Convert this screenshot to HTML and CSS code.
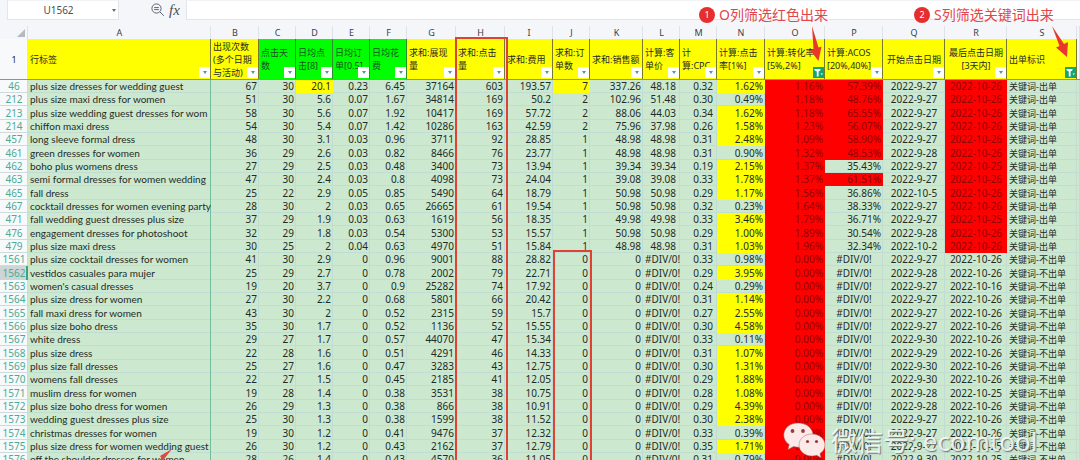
FILE: index.html
```html
<!DOCTYPE html>
<html lang="zh-CN">
<head>
<meta charset="utf-8">
<title>U1562</title>
<link rel="stylesheet" href="styles.css">
</head>
<body>
<div class="app">
  <header class="bar">
    <div class="namebox">
      <input class="name-input" type="text" value="U1562" aria-label="名称框">
      <button class="name-drop" type="button" aria-label="展开名称框"></button>
    </div>
    <div class="tools">
      <button class="tool" type="button" aria-label="搜索">
        <svg width="14" height="14" viewBox="0 0 14 14" fill="none" stroke="#5d6470"><circle cx="5.5" cy="5.5" r="4.6"/><path d="M3.2 4.6h4.6M3.2 6.6h4.6M9 9l3.8 3.8"/></svg>
      </button>
      <button class="tool fx" type="button">fx</button>
    </div>
    <input class="formula" type="text" aria-label="编辑栏">
  </header>
  <main class="sheet">
    <table class="grid">
      <colgroup id="cols"></colgroup>
      <thead id="head"></thead>
      <tbody id="body"></tbody>
    </table>
    <div class="frame frame-clicks"></div>
    <div class="frame frame-orders"></div>
  </main>
  <div class="note note-one"><span class="badge">1</span>O列筛选红色出来</div>
  <div class="note note-two"><span class="badge">2</span>S列筛选关键词出来</div>
  <svg class="arrow arrow-one" width="12" height="36" viewBox="0 0 12 36"><path fill="#e8382c" d="M2 0L8.500 21.500L11.500 20.500L8.500 35L0 24L3.500 23.500Z"/></svg>
  <svg class="arrow arrow-two" width="17" height="32" viewBox="0 0 17 32"><path fill="#e8382c" d="M0 0L12 18L16 16L15 31L4 21.500L7.500 20Z"/></svg>
  <svg class="arrow arrow-three" width="22" height="14" viewBox="0 0 22 14"><path fill="#dc4a40" d="M20 0L8 7L10 10L0 14H10L12 10Z"/></svg>
  <div class="mark">
    <svg width="43" height="36" viewBox="0 0 43 36">
      <g fill="#fde9e8" stroke="#9d6f6c" stroke-width=".5">
        <path d="M15 1C6.500 1 .8 6.500.8 13.200c0 4 2.100 7.200 5.400 9.400L5 27.500l5.500-3c2 .5 3.500.7 5.500.7C24 25 30 19.500 30 13.200 30 6.500 23.500 1 15 1Z"/>
        <path d="M29 12c-7.500 0-13 5-13 11s5.500 11 13 11c1.700 0 3.200-.2 4.600-.7l4.400 2.400-1-4.200c3.200-2 5-5 5-8.500 0-6-5.500-11-13-11Z"/>
      </g>
      <g fill="#983c3b"><circle cx="9.500" cy="9" r="1.900"/><circle cx="20" cy="9" r="1.900"/><circle cx="24.500" cy="19.500" r="1.600"/><circle cx="33.500" cy="19.500" r="1.600"/></g>
    </svg>
    <span>微信号: ecomtool</span>
  </div>
</div>
<script src="sheet.js"></script>
</body>
</html>
```

FILE: styles.css
```css
* { box-sizing: border-box; }
body {
  margin: 0;
  overflow: hidden;
  background: #f5f6fa;
  font-family: "Noto Sans", "Noto Sans CJK SC", sans-serif;
  color: #1f2b26;
}
.app {
  position: relative;
  display: flex;
  flex-direction: column;
  height: 100vh;
  overflow: hidden;
}
button, input { font: inherit; color: inherit; padding: 0; border: 0; background: none; }
.bar { display: flex; flex: none; padding: 0 0 6px 7px; }
.namebox {
  display: flex;
  width: 112px;
  height: 20px;
  background: #fff;
  border: 1px solid #e3e5ea;
  border-top-color: #f2f3f6;
}
.name-input { flex: 1; min-width: 0; font-size: 10px; text-align: center; color: #4a4f58; }
.name-drop { width: 9px; display: grid; place-items: center; }
.name-drop::after { content: ""; border: 2px solid transparent; border-top: 3px solid #666b74; border-bottom: 0; }
.tools { display: flex; flex: none; width: 67px; padding: 0 5px 0 32px; gap: 4px; align-items: center; }
.tool { display: block; height: 14px; line-height: 14px; flex: none; }
.fx { font-family: "Liberation Serif", serif; font-style: italic; font-size: 15px; line-height: 12px; color: #4a4f58; }
.formula { flex: 1; min-width: 0; height: 20px; background: #fff; border: 1px solid #e3e5ea; border-right: 0; border-top-color: #f2f3f6; }

.sheet { position: relative; flex: 1; min-height: 0; overflow: hidden; }
.grid { width: 100%; table-layout: fixed; border-collapse: separate; border-spacing: 0; font-size: 10px; line-height: 13px; }
.grid th, .grid td { padding: 0 2px; overflow: hidden; white-space: nowrap; font-weight: 400; }
.letters th { height: 13px; font-size: 9px; color: #3b4048; box-shadow: inset -1px 0 #dfe2e6; }
.letters .corner { position: relative; }
.corner::after { content: ""; position: absolute; right: 3px; bottom: 2px; border: 4px solid #b6b9bd; border-top-color: transparent; border-left-color: transparent; }

.titles th { position: relative; height: 41px; font-size: 9px; text-align: left; background: #ff0; border-bottom: 1px solid #6fae5a; box-shadow: inset -1px 0 #777a2c; }
.titles .green { background: #0f0; box-shadow: inset -1px 0 #2a8f2a; color: #17551f; }
.titles .mid { text-align: center; }
.titles .num, .titles .blank { background: #f8f9fb; text-align: center; box-shadow: inset -1px 0 #dfe2e6; }
.filter { position: absolute; right: 1px; bottom: 1px; width: 11px; height: 11px; display: grid; place-items: center; background: #fff; }
.filter::after { content: ""; border: 2px solid transparent; border-top: 3px solid #4a9c94; border-bottom: 0; }
.filter.on { background: #14a576; }
.filter.on::after { content: none; }
.filter svg { display: block; }

.rows tr { height: 13px; }
.rows tr:nth-child(3n) { height: 14px; }
.rows td { background: #cce8cf; text-align: right; box-shadow: inset -1px -1px #c0dcd3; }
.rows th { background: #f8f9fb; color: #4bab94; text-align: center; box-shadow: inset -1px -1px #cddbdc; }
.rows .current { background: #cdd5d5; box-shadow: inset -2px 0 #3aa583; }
.rows .left { text-align: left; }
.rows .key { padding-right: 0; font-family: Lato, "Noto Sans", sans-serif; box-shadow: inset -1px 0 #72bd9f, inset 0 -1px #c0dcd3; }
.rows .mid { text-align: center; }
.rows .money { padding-right: 4px; }
.rows .kind { font-size: 9px; text-align: left; }
.rows .yellow { background: #ff0; box-shadow: none; }
.rows .red { background: #f00; color: #8f0505; box-shadow: none; }

.frame { position: absolute; border: 2px solid #df4234; pointer-events: none; }
.frame-clicks { left: 455px; width: 53px; top: 11px; bottom: -4px; }
.frame-orders { left: 553px; width: 39px; top: 224px; bottom: -4px; }
.note { position: absolute; display: flex; align-items: center; gap: 4px; top: 5px; font-size: 14px; line-height: 19px; color: #e0474c; white-space: nowrap; }
.note-one { left: 699px; }
.note-two { left: 914px; }
.badge { width: 16px; height: 16px; border-radius: 50%; background: #e62e2e; color: #fff; font-size: 9px; line-height: 16px; text-align: center; }
.arrow { position: absolute; pointer-events: none; }
.arrow-one { left: 810px; top: 26px; }
.arrow-two { left: 1052px; top: 26px; }
.arrow-three { left: 152px; top: 449px; }
.mark { position: absolute; left: 783px; top: 422px; display: flex; gap: 5px; font-size: 26px; line-height: 38px; color: rgba(255, 255, 255, .85); text-shadow: 1px 1px 1px #6a7a72; white-space: nowrap; pointer-events: none; }
```

FILE: sheet.js
```js
const widths = [28, 183, 48, 37, 37, 37, 37, 49, 49, 48, 37, 53, 37, 37, 48, 60, 58, 62, 62, 70, 3];
const titles = [
  '行标签', '出现次数<br>(多个日期<br>与活动)', '点击天<br>数', '日均点<br>击[8]', '日均订<br>单[0.5]', '日均花<br>费',
  '求和:展现<br>量', '求和:点击<br>量', '求和:费用', '求和:订<br>单数', '求和:销售额', '计算:客<br>单价', '计<br>算:CPC',
  '计算:点击<br>率[1%]', '计算:转化率<br>[5%,2%]', '计算:ACOS<br>[20%,40%]', '开始点击日期', '最后点击日期<br>[3天内]', '出单标识'
];
// row | label | B..P | first click | last click
const data = `46|plus size dresses for wedding guest|67|30|20.1|0.23|6.45|37164|603|193.57|7|337.26|48.18|0.32|1.62%|1.16%|57.39%|9-27|10-26
212|plus size maxi dress for women|51|30|5.6|0.07|1.67|34814|169|50.2|2|102.96|51.48|0.30|0.49%|1.18%|48.76%|9-27|10-26
213|plus size wedding guest dresses for wom|58|30|5.6|0.07|1.92|10417|169|57.72|2|88.06|44.03|0.34|1.62%|1.18%|65.55%|9-27|10-26
214|chiffon maxi dress|54|30|5.4|0.07|1.42|10286|163|42.59|2|75.96|37.98|0.26|1.58%|1.23%|56.07%|9-27|10-26
457|long sleeve formal dress|48|30|3.1|0.03|0.96|3711|92|28.85|1|48.98|48.98|0.31|2.48%|1.09%|58.90%|9-27|10-26
461|green dresses for women|36|29|2.6|0.03|0.82|8466|76|23.77|1|48.98|48.98|0.31|0.90%|1.32%|48.53%|9-28|10-26
462|boho plus womens dress|27|29|2.5|0.03|0.48|3400|73|13.94|1|39.34|39.34|0.19|2.15%|1.37%|35.43%|9-27|10-25
463|semi formal dresses for women wedding|47|30|2.4|0.03|0.8|4098|73|24.04|1|39.08|39.08|0.33|1.78%|1.37%|61.51%|9-27|10-26
465|fall dress|25|22|2.9|0.05|0.85|5490|64|18.79|1|50.98|50.98|0.29|1.17%|1.56%|36.86%|10-5|10-26
467|cocktail dresses for women evening party|28|30|2|0.03|0.65|26665|61|19.54|1|50.98|50.98|0.32|0.23%|1.64%|38.33%|9-27|10-26
471|fall wedding guest dresses plus size|37|29|1.9|0.03|0.63|1619|56|18.35|1|49.98|49.98|0.33|3.46%|1.79%|36.71%|9-27|10-25
476|engagement dresses for photoshoot|32|29|1.8|0.03|0.54|5300|53|15.57|1|50.98|50.98|0.29|1.00%|1.89%|30.54%|9-28|10-26
479|plus size maxi dress|30|25|2|0.04|0.63|4970|51|15.84|1|48.98|48.98|0.31|1.03%|1.96%|32.34%|10-2|10-26
1561|plus size cocktail dresses for women|41|30|2.9|0|0.96|9001|88|28.82|0|0|#DIV/0!|0.33|0.98%|0.00%|#DIV/0!|9-27|10-26
1562|vestidos casuales para mujer|25|29|2.7|0|0.78|2002|79|22.71|0|0|#DIV/0!|0.29|3.95%|0.00%|#DIV/0!|9-28|10-26
1563|women's casual dresses|19|20|3.7|0|0.9|25282|74|17.92|0|0|#DIV/0!|0.24|0.29%|0.00%|#DIV/0!|9-27|10-16
1564|plus size dress for women|27|30|2.2|0|0.68|5801|66|20.42|0|0|#DIV/0!|0.31|1.14%|0.00%|#DIV/0!|9-27|10-26
1565|fall maxi dress for women|43|30|2|0|0.52|2315|59|15.7|0|0|#DIV/0!|0.27|2.55%|0.00%|#DIV/0!|9-27|10-26
1566|plus size boho dress|35|30|1.7|0|0.52|1136|52|15.55|0|0|#DIV/0!|0.30|4.58%|0.00%|#DIV/0!|9-27|10-26
1567|white dress|29|27|1.7|0|0.57|44070|47|15.34|0|0|#DIV/0!|0.33|0.11%|0.00%|#DIV/0!|9-30|10-26
1568|plus size dress|22|28|1.6|0|0.51|4291|46|14.33|0|0|#DIV/0!|0.31|1.07%|0.00%|#DIV/0!|9-29|10-26
1569|plus size fall dresses|25|27|1.6|0|0.47|3283|43|12.75|0|0|#DIV/0!|0.30|1.31%|0.00%|#DIV/0!|9-30|10-26
1570|womens fall dresses|22|27|1.5|0|0.45|2185|41|12.05|0|0|#DIV/0!|0.29|1.88%|0.00%|#DIV/0!|9-30|10-26
1571|muslim dress for women|19|28|1.4|0|0.38|3531|38|10.75|0|0|#DIV/0!|0.28|1.08%|0.00%|#DIV/0!|9-28|10-25
1572|plus size boho dress for women|26|29|1.3|0|0.38|866|38|10.91|0|0|#DIV/0!|0.29|4.39%|0.00%|#DIV/0!|9-28|10-26
1573|wedding guest dresses plus size|25|30|1.3|0|0.38|1599|38|11.52|0|0|#DIV/0!|0.30|2.38%|0.00%|#DIV/0!|9-27|10-26
1574|christmas dresses for women|19|30|1.2|0|0.41|9476|37|12.32|0|0|#DIV/0!|0.33|0.39%|0.00%|#DIV/0!|9-27|10-26
1575|plus size dress for women wedding guest|26|30|1.2|0|0.43|2162|37|12.79|0|0|#DIV/0!|0.35|1.71%|0.00%|#DIV/0!|9-27|10-25
1576|off the shoulder dresses for women|28|26|1.4|0|0.43|4570|36|11.05|0|0|#DIV/0!|0.31|0.79%|0.00%|#DIV/0!|9-30|10-25`;

const funnel = '<svg width="11" height="11" viewBox="0 0 11 11" fill="#fff"><path d="M1.500 2h6v1.200L5.600 4.600V9.500H3.800V4.600L1.500 3.200ZM7.500 6.500h2.500L8.800 8Z"/></svg>';

document.getElementById('cols').innerHTML = widths.map(w => `<col style="width:${w}px">`).join('');

const letters = [...'ABCDEFGHIJKLMNOPQRS'].map(l => `<th scope="col">${l}</th>`).join('');
const heads = titles.map((t, i) => {
  const tone = i >= 2 && i <= 5 ? 'green' : i === 16 || i === 17 ? 'mid' : '';
  const on = i === 14 || i === 18;
  return `<th class="${tone}">${t}<button type="button" class="filter${on ? ' on' : ''}" aria-label="筛选">${on ? funnel : ''}</button></th>`;
}).join('');
document.getElementById('head').innerHTML =
  `<tr class="letters"><th class="corner"></th>${letters}<th></th></tr>` +
  `<tr class="titles"><th class="num">1</th>${heads}<th class="blank"></th></tr>`;

function cellClass(v, i) {
  const n = parseFloat(v);
  if (i === 0) return 'left key';
  if (i === 3 && n > 8) return 'yellow';
  if (i === 9 && n > 5) return 'yellow';
  if (v === '#DIV/0!') return 'mid';
  if (i === 11 || i === 12) return 'money';
  if (i === 13 && n >= 1) return 'yellow';
  if (i === 14) return 'red';
  if (i === 15 && n > 40) return 'red';
  return i === 16 || i === 17 ? 'mid' : '';
}

const body = document.getElementById('body');
body.className = 'rows';
body.innerHTML = data.split('\n').map(line => {
  const [num, ...cells] = line.split('|');
  const sold = cells[9] !== '0';
  const tds = cells.map((v, i) => {
    const cls = cellClass(v, i) + (i === 17 && sold ? ' red' : '');
    return `<td class="${cls}">${i > 15 ? '2022-' + v : v}</td>`;
  }).join('');
  return `<tr><th scope="row" class="${num === '1562' ? 'current' : ''}">${num}</th>${tds}<td class="kind">关键词-${sold ? '' : '不'}出单</td><td></td></tr>`;
}).join('');
```
